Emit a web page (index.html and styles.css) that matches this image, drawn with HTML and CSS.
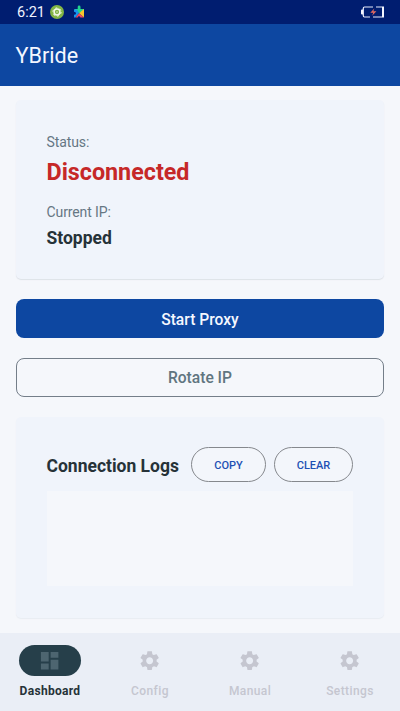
FILE: index.html
```html
<!DOCTYPE html>
<html lang="en">
<head>
<meta charset="utf-8">
<title>YBride</title>
<link rel="stylesheet" href="styles.css">
</head>
<body>
<svg class="defs" aria-hidden="true">
  <symbol id="gear" viewBox="0 0 24 24"><path d="M19.14 12.94c.04-.3.06-.61.06-.94 0-.32-.02-.64-.07-.94l2.03-1.58c.18-.14.23-.41.12-.61l-1.92-3.32c-.12-.22-.37-.29-.59-.22l-2.39.96c-.5-.38-1.03-.7-1.62-.94l-.36-2.54c-.04-.24-.24-.41-.48-.41h-3.84c-.24 0-.43.17-.47.41l-.36 2.54c-.59.24-1.13.57-1.62.94l-2.39-.96c-.22-.08-.47 0-.59.22L2.74 8.87c-.12.21-.08.47.12.61l2.03 1.58c-.05.3-.09.63-.09.94s.02.64.07.94l-2.03 1.58c-.18.14-.23.41-.12.61l1.92 3.32c.12.22.37.29.59.22l2.39-.96c.5.38 1.03.7 1.62.94l.36 2.54c.05.24.24.41.48.41h3.84c.24 0 .44-.17.47-.41l.36-2.54c.59-.24 1.13-.56 1.62-.94l2.39.96c.22.08.47 0 .59-.22l1.92-3.32c.12-.22.07-.47-.12-.61l-2.01-1.58zM12 15.6c-1.98 0-3.6-1.62-3.6-3.6s1.62-3.6 3.6-3.6 3.6 1.62 3.6 3.6-1.62 3.6-3.6 3.6z"/></symbol>
</svg>
<div class="screen">
  <div class="statusbar">
    <span class="time">6:21</span>
    <svg class="badge" viewBox="0 0 14 14"><circle cx="7" cy="7" r="7" fill="#82b545"/><g fill="none" stroke="#f3f9e9"><circle cx="7" cy="7" r="2.900" stroke-width="1.500"/><circle cx="7" cy="7" r="4.100" stroke-width="1" stroke-dasharray="1.900 2.400"/></g><circle cx="7" cy="7" r=".7" fill="#f3f9e9"/></svg>
    <svg class="puzzle" viewBox="0 0 12 13"><path d="M1 4h3.700V2a1.400 1.400 0 0 1 2.800 0v2H11v2L6 8.200 3 6z" fill="#22d48d"/><path d="M1 4.500h3l2 3.700-3.500 4.300H1V9.800q2 0 2-1.500T1 6.800z" fill="#1695ef"/><path d="M11 4v8.500L6 8.200z" fill="#f9c52c"/><path d="M6 8.200l5 4.300H7.300a1.300 1.300 0 0 0-2.600 0H2.500z" fill="#f2495c"/></svg>
    <svg class="battery" viewBox="0 0 23 12"><g fill="none" stroke="#e8ecfb" stroke-width="1.200"><path d="M12 1H3.500Q2.300 1 2.300 2.200v7.600Q2.300 11 3.500 11H9"/><path d="M15 1h6M12 11h9"/></g><path d="M21 .5h2v11h-2zM0 4.500q0-1 1-1h1v5H1q-1 0-1-1z" fill="#f5f7ff"/><path d="M13.300 2.500 9.300 6.700h2.900L11.200 9.700l4.200-4.400h-3z" fill="#e66c60"/></svg>
  </div>
  <header class="appbar">YBride</header>
  <main>
    <section class="card status">
      <div class="label">Status:</div>
      <div class="state">Disconnected</div>
      <div class="label ip">Current IP:</div>
      <div class="value">Stopped</div>
    </section>
    <button class="btn primary">Start Proxy</button>
    <button class="btn outline">Rotate IP</button>
    <section class="card logs">
      <div class="logs-head">
        <h2>Connection Logs</h2>
        <button class="pill copy">COPY</button>
        <button class="pill clear">CLEAR</button>
      </div>
      <div class="logbox"></div>
    </section>
  </main>
  <nav>
    <a class="active"><span class="ind"><svg viewBox="0 0 24 24"><path d="M3 13h8V3H3v10zm0 8h8v-6H3v6zm10 0h8V11h-8v10zm0-18v6h8V3h-8z"/></svg></span><span>Dashboard</span></a>
    <a><span class="ind"><svg><use href="#gear"/></svg></span><span>Config</span></a>
    <a><span class="ind"><svg><use href="#gear"/></svg></span><span>Manual</span></a>
    <a><span class="ind"><svg><use href="#gear"/></svg></span><span>Settings</span></a>
  </nav>
</div>
</body>
</html>
```
FILE: styles.css
```css
* { box-sizing: border-box; }
body { margin: 0; font-family: Roboto, sans-serif; background: #f5f7fb; }
.defs { position: absolute; width: 0; height: 0; }
.screen { width: 400px; height: 711px; display: flex; flex-direction: column; overflow: hidden; }
.statusbar { height: 23.500px; background: #001d70; display: flex; align-items: center; padding: 0 16px 0 17px; flex: none; }
.time { font-size: 14.500px; line-height: 23px; color: #f0f3ff; width: 33px; padding-top: 1px; }
.badge { width: 14px; height: 14px; }
.puzzle { width: 12px; height: 13px; margin-left: 8.500px; }
.battery { width: 23px; height: 12px; margin-left: auto; }
.appbar { height: 62px; flex: none; background: #0d47a1; color: #f3f7ff; font-size: 21.600px; line-height: 63px; padding-left: 15.500px; }
main { flex: 1; padding: 14.500px 15.600px 0 15.500px; display: flex; flex-direction: column; }
.card { background: #f0f4fb; border-radius: 5px; padding: 31px; box-shadow: 0 1px 1px #dde1e7; flex: none; }
.status { height: 179px; padding-top: 33px; }
.label { font-size: 14px; line-height: 18px; letter-spacing: -.1px; color: #667784; }
.state { font-size: 23.300px; line-height: 28px; margin-top: 7px; font-weight: 700; color: #c62828; }
.ip { margin-top: 17px; }
.value { font-size: 17.500px; line-height: 22px; margin-top: 6px; font-weight: 700; color: #263238; }
.btn { height: 39px; flex: none; border: 0; border-radius: 8px; font: 500 15.600px/39px Roboto, sans-serif; padding: 2px 0 0; }
.primary { margin-top: 20px; background: #0d47a1; color: #f5f8ff; }
.outline { margin-top: 20px; background: transparent; border: 1px solid #747e89; color: #607580; line-height: 37px; padding-top: 1px; }
.logs { height: 201px; margin-top: 20px; padding: 30px 31.900px 0 31px; box-shadow: 0 1px 1px #e8ecf2; }
.logs-head { display: flex; align-items: center; height: 35px; }
h2 { margin: 0; font-size: 17.500px; line-height: 24px; padding-top: 2px; font-weight: 700; color: #263238; flex: 1; white-space: nowrap; }
.pill { height: 35px; border: 1px solid #85888d; border-radius: 18px; background: #f3f6fb; color: #1d50b4; font: 500 11px/33px Roboto, sans-serif; padding: 1px 0 0 1px; }
.copy { width: 75px; margin-right: 8px; }
.clear { width: 79px; }
.logbox { height: 95px; margin-top: 9px; background: #f5f7fb; }
nav { height: 78px; flex: none; background: #eaeef6; display: grid; grid-template-columns: repeat(4, 1fr); }
nav a { display: flex; flex-direction: column; align-items: center; padding-top: 12px; font-size: 12px; line-height: 16px; font-weight: 500; letter-spacing: .4px; color: #c5c6d0; }
.ind { width: 62px; height: 31px; border-radius: 16px; display: grid; place-items: center; margin-bottom: 7px; }
.ind svg { width: 23.300px; height: 23.300px; fill: #c5c6d0; }
.active { color: #263238; font-weight: 700; letter-spacing: .3px; }
.active .ind { background: #263f4a; }
.active .ind svg { fill: #4d6570; }
```
